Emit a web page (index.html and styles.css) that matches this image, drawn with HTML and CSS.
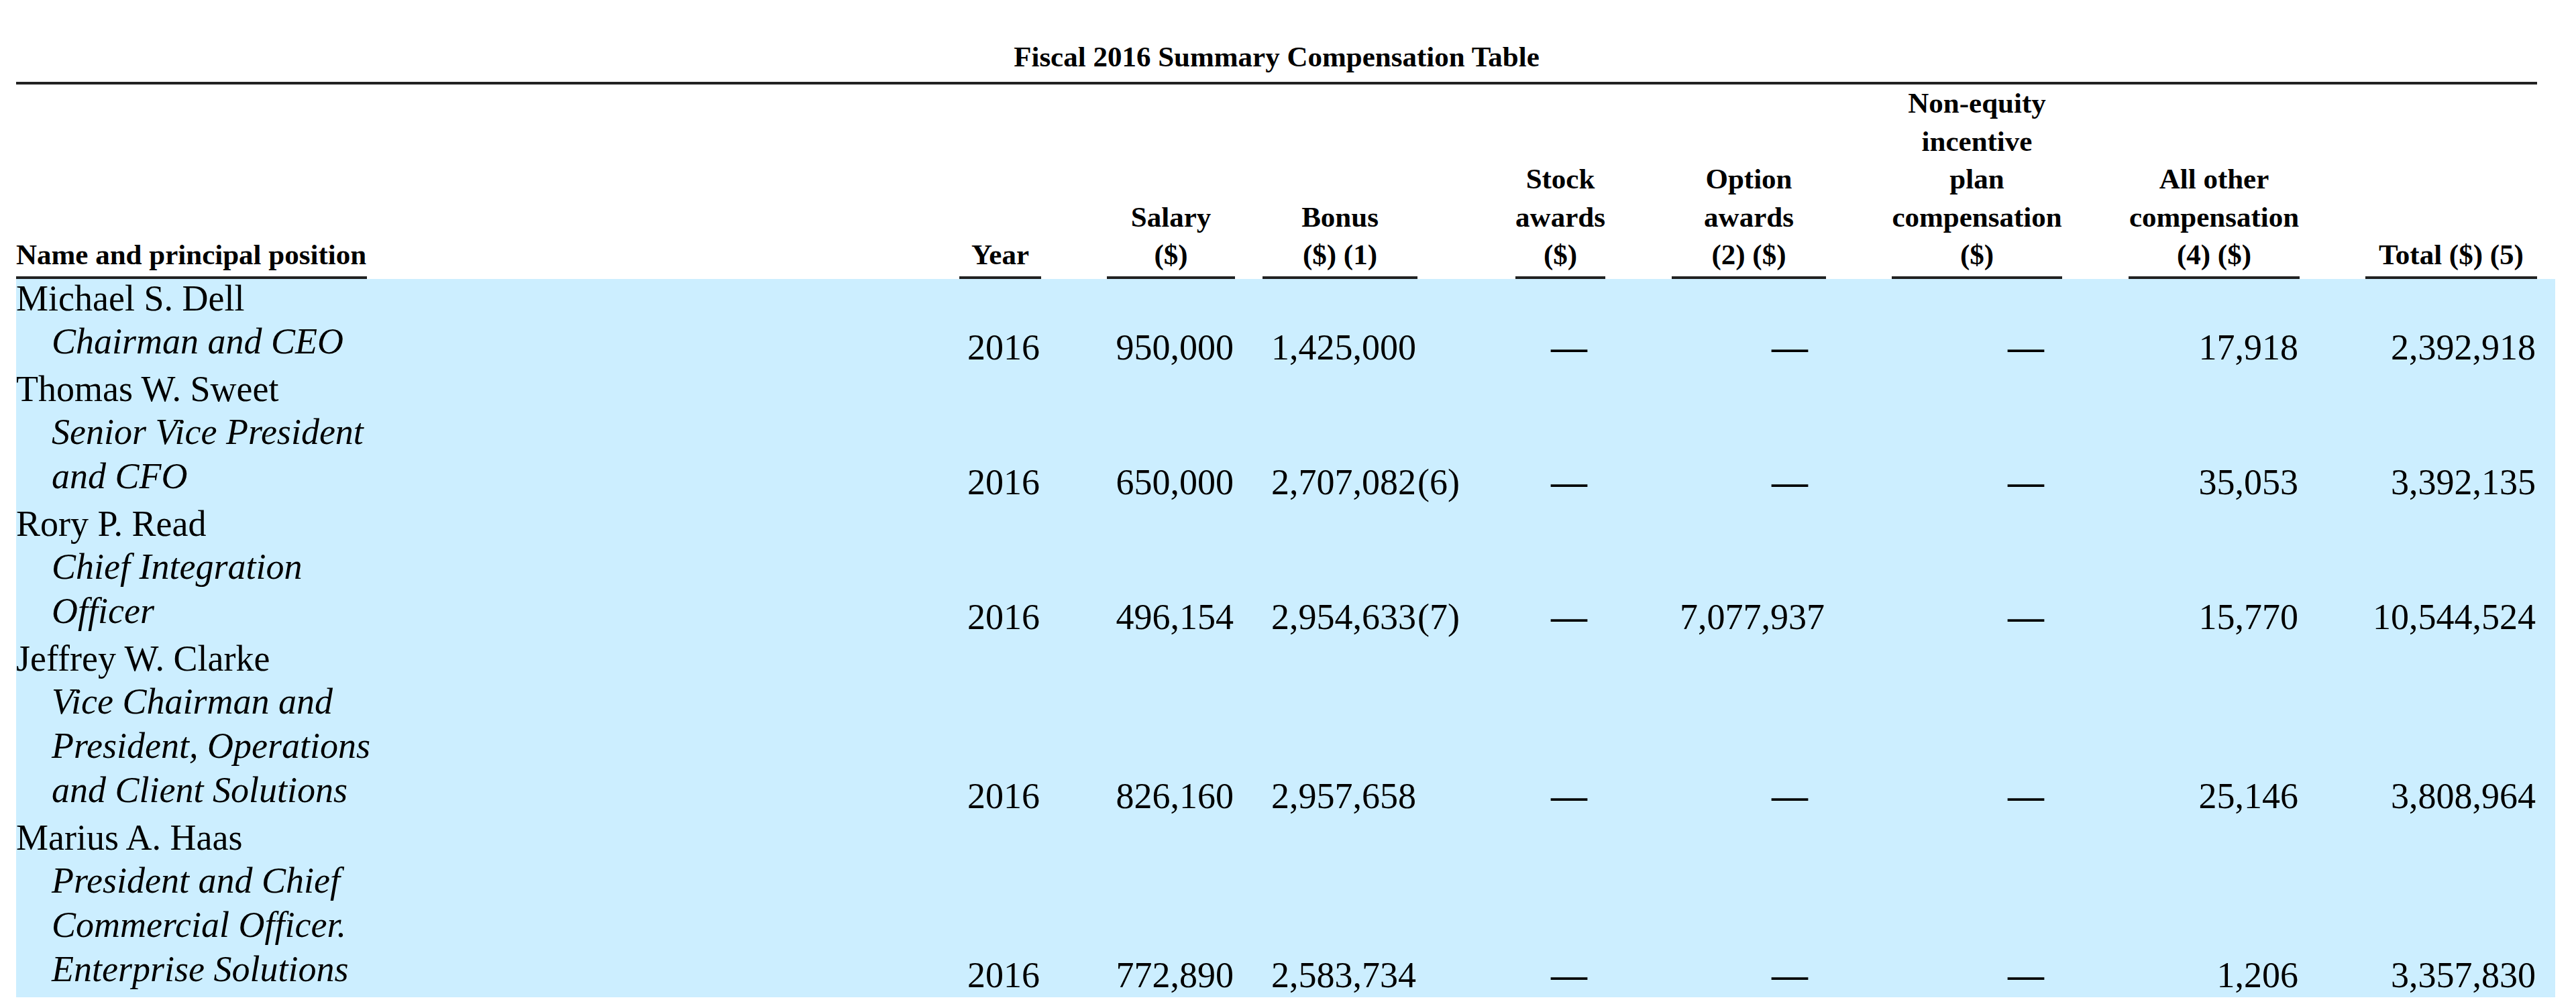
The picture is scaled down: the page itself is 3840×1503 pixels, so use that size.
FILE: index.html
```html
<!DOCTYPE html>
<html lang="en">
<head>
<meta charset="utf-8">
<title>Fiscal 2016 Summary Compensation Table</title>
<link rel="stylesheet" href="styles.css">
</head>
<body>
<div class="page">
  <div class="caption">Fiscal 2016 Summary Compensation Table</div>
  <table class="comp">
    <colgroup>
      <col class="w-name"><col class="w-g1">
      <col class="w-year"><col class="w-g2">
      <col class="w-salary"><col class="w-g3">
      <col class="w-bonus"><col class="w-g4">
      <col class="w-stock"><col class="w-g5">
      <col class="w-option"><col class="w-g6">
      <col class="w-noneq"><col class="w-g7">
      <col class="w-other"><col class="w-g8">
      <col class="w-total"><col class="w-tail">
    </colgroup>
    <thead>
      <tr>
        <th class="lbl h-name">Name and principal position</th>
        <th></th>
        <th class="lbl">Year</th>
        <th></th>
        <th class="lbl">Salary<br>($)</th>
        <th></th>
        <th class="lbl">Bonus<br>($) (1)</th>
        <th></th>
        <th class="lbl">Stock<br>awards<br>($)</th>
        <th></th>
        <th class="lbl">Option<br>awards<br>(2) ($)</th>
        <th></th>
        <th class="lbl">Non-equity<br>incentive<br>plan<br>compensation<br>($)</th>
        <th></th>
        <th class="lbl">All other<br>compensation<br>(4) ($)</th>
        <th></th>
        <th class="lbl">Total ($) (5)</th>
        <th></th>
      </tr>
    </thead>
    <tbody>
      <tr class="r-name"><td class="name">Michael S. Dell</td><td colspan="17"></td></tr>
      <tr class="r-title">
        <td class="title">Chairman and CEO</td><td></td>
        <td class="num">2016</td><td></td>
        <td class="num">950,000</td><td></td>
        <td class="num">1,425,000</td><td class="fn"></td>
        <td class="num"><span class="dash">—</span></td><td></td>
        <td class="num"><span class="dash">—</span></td><td></td>
        <td class="num"><span class="dash">—</span></td><td></td>
        <td class="num">17,918</td><td></td>
        <td class="num">2,392,918</td><td></td>
      </tr>

      <tr class="r-name"><td class="name">Thomas W. Sweet</td><td colspan="17"></td></tr>
      <tr class="r-title">
        <td class="title">Senior Vice President<br>and CFO</td><td></td>
        <td class="num">2016</td><td></td>
        <td class="num">650,000</td><td></td>
        <td class="num">2,707,082</td><td class="fn">(6)</td>
        <td class="num"><span class="dash">—</span></td><td></td>
        <td class="num"><span class="dash">—</span></td><td></td>
        <td class="num"><span class="dash">—</span></td><td></td>
        <td class="num">35,053</td><td></td>
        <td class="num">3,392,135</td><td></td>
      </tr>

      <tr class="r-name"><td class="name">Rory P. Read</td><td colspan="17"></td></tr>
      <tr class="r-title">
        <td class="title">Chief Integration<br>Officer</td><td></td>
        <td class="num">2016</td><td></td>
        <td class="num">496,154</td><td></td>
        <td class="num">2,954,633</td><td class="fn">(7)</td>
        <td class="num"><span class="dash">—</span></td><td></td>
        <td class="num">7,077,937</td><td></td>
        <td class="num"><span class="dash">—</span></td><td></td>
        <td class="num">15,770</td><td></td>
        <td class="num">10,544,524</td><td></td>
      </tr>

      <tr class="r-name"><td class="name">Jeffrey W. Clarke</td><td colspan="17"></td></tr>
      <tr class="r-title">
        <td class="title">Vice Chairman and<br>President, Operations<br>and Client Solutions</td><td></td>
        <td class="num">2016</td><td></td>
        <td class="num">826,160</td><td></td>
        <td class="num">2,957,658</td><td class="fn"></td>
        <td class="num"><span class="dash">—</span></td><td></td>
        <td class="num"><span class="dash">—</span></td><td></td>
        <td class="num"><span class="dash">—</span></td><td></td>
        <td class="num">25,146</td><td></td>
        <td class="num">3,808,964</td><td></td>
      </tr>

      <tr class="r-name"><td class="name">Marius A. Haas</td><td colspan="17"></td></tr>
      <tr class="r-title">
        <td class="title">President and Chief<br>Commercial Officer.<br>Enterprise Solutions</td><td></td>
        <td class="num">2016</td><td></td>
        <td class="num">772,890</td><td></td>
        <td class="num">2,583,734</td><td class="fn"></td>
        <td class="num"><span class="dash">—</span></td><td></td>
        <td class="num"><span class="dash">—</span></td><td></td>
        <td class="num"><span class="dash">—</span></td><td></td>
        <td class="num">1,206</td><td></td>
        <td class="num">3,357,830</td><td></td>
      </tr>
    </tbody>
  </table>
</div>
</body>
</html>
```

FILE: styles.css
```css
html, body {
  margin: 0;
  padding: 0;
  background: #ffffff;
}

body {
  font-family: "Liberation Serif", "Times New Roman", serif;
  color: #000000;
}

.page {
  padding: 56px 0 0 24px;
}

.caption {
  width: 3758px;
  font-size: 43px;
  font-weight: bold;
  line-height: 58px;
  text-align: center;
  padding-bottom: 8px;
  border-bottom: 4px solid #222222;
}

.comp {
  border-collapse: separate;
  border-spacing: 0;
  table-layout: fixed;
  width: 3785px;
}

.w-name   { width: 523px; }
.w-g1     { width: 883px; }
.w-year   { width: 122px; }
.w-g2     { width: 98px; }
.w-salary { width: 191px; }
.w-g3     { width: 41px; }
.w-bonus  { width: 231px; }
.w-g4     { width: 146px; }
.w-stock  { width: 134px; }
.w-g5     { width: 99px; }
.w-option { width: 230px; }
.w-g6     { width: 98px; }
.w-noneq  { width: 254px; }
.w-g7     { width: 99px; }
.w-other  { width: 255px; }
.w-g8     { width: 98px; }
.w-total  { width: 256px; }
.w-tail   { width: 27px; }

.comp th {
  font-size: 43px;
  font-weight: bold;
  line-height: 56.5px;
  padding: 0 0 3px 0;
  vertical-align: bottom;
  text-align: center;
  white-space: nowrap;
}

.comp th.lbl {
  border-bottom: 4px solid #222222;
}

.comp th.h-name {
  text-align: left;
}

.comp tbody td {
  background: #cceeff;
  padding: 0;
  font-size: 54px;
  white-space: nowrap;
  vertical-align: bottom;
}

.r-name td {
  line-height: 58px;
}

.r-title td {
  line-height: 66px;
  padding: 2px 0 0 0;
}

.r-title td.title {
  font-style: italic;
  padding: 2px 0 9px 53px;
}

.r-title td.num {
  text-align: right;
  padding-right: 2px;
}

.r-title td.fn {
  text-align: left;
}

.dash {
  font-weight: bold;
  margin-right: 25px;
}
```
